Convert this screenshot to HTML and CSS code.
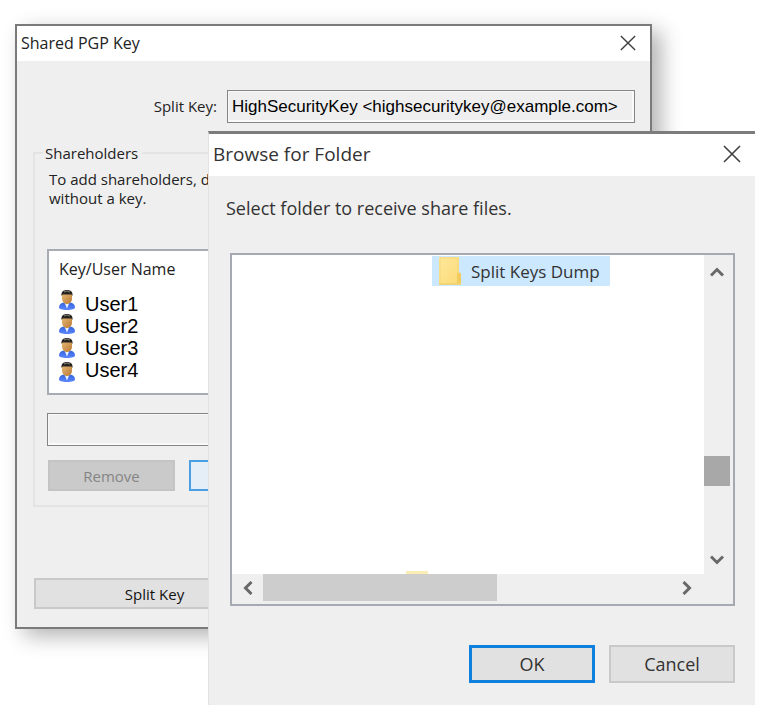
FILE: index.html
```html
<!DOCTYPE html>
<html lang="en">
<head>
<meta charset="utf-8">
<title>Shared PGP Key</title>
<link rel="stylesheet" href="styles.css">
</head>
<body>
<svg class="defs" aria-hidden="true">
  <defs>
    <linearGradient id="skin" x1="0" y1="0" x2="1" y2="1"><stop offset="0" stop-color="#e8b572"/><stop offset="1" stop-color="#b67a35"/></linearGradient>
    <linearGradient id="coat" x1="0" y1="0" x2="0" y2="1"><stop offset="0" stop-color="#3564dc"/><stop offset="1" stop-color="#5b86ff"/></linearGradient>
    <linearGradient id="paper" x1="0" y1="0" x2="1" y2="1"><stop offset="0" stop-color="#ffe89c"/><stop offset="1" stop-color="#fbda75"/></linearGradient>
    <symbol id="person" viewBox="0 0 16 20">
      <path d="M0 17.500C0 14.500 2 13 5 12.500h6c3 .5 5 2 5 5C16 19 13 20 8 20S0 19 0 17.500Z" fill="url(#coat)"/>
      <path d="M5.500 12.500h5L8 18.500Z" fill="#eef4ff"/>
      <path d="M3 4h10v4.500c0 3-2 5.500-5 5.500S3 11.500 3 8.500Z" fill="url(#skin)"/>
      <path d="M2.500 6C2 2 4 0 8 0s6 2 5.500 6L12.500 4.500H3.500Z" fill="#25231f"/>
      <path d="M5 2C7 .8 9 .8 11 2" fill="none" stroke="#77736b" stroke-width="1.200"/>
    </symbol>
    <symbol id="cross" viewBox="0 0 18 18"><path d="M1 1l16 16M17 1L1 17" fill="none" stroke="#404040" stroke-width="1.600"/></symbol>
    <symbol id="chevron" viewBox="0 0 14 12"><path d="M1 9.500L7 3.500l6 6" fill="none" stroke="#686868" stroke-width="3"/></symbol>
  </defs>
</svg>

<main class="desktop">
  <section class="window key-window" aria-labelledby="key-title">
    <header class="titlebar">
      <h1 id="key-title" class="title">Shared PGP Key</h1>
      <button class="close" type="button" aria-label="Close"><svg><use href="#cross"/></svg></button>
    </header>
    <form class="key-body">
      <div class="key-row">
        <label for="split-key">Split Key:</label>
        <input id="split-key" class="field key-field" type="text" readonly value="HighSecurityKey &lt;highsecuritykey@example.com&gt;">
      </div>
      <fieldset class="holders">
        <legend>Shareholders</legend>
        <p class="hint">To add shareholders, d<br>without a key.</p>
        <div class="list">
          <h2 class="list-head">Key/User Name</h2>
          <div class="list-body">
            <div class="icons" aria-hidden="true">
              <svg><use href="#person"/></svg>
              <svg><use href="#person"/></svg>
              <svg><use href="#person"/></svg>
              <svg><use href="#person"/></svg>
            </div>
            <ul class="names">
              <li>User1</li>
              <li>User2</li>
              <li>User3</li>
              <li>User4</li>
            </ul>
          </div>
        </div>
        <input class="field user-field" type="text" readonly aria-label="User">
        <div class="holder-actions">
          <button class="button remove" type="button" disabled>Remove</button>
          <button class="button add" type="button" aria-label="Add"></button>
        </div>
      </fieldset>
      <div class="key-actions">
        <button class="button split" type="button">Split Key</button>
      </div>
    </form>
  </section>

  <section class="window folder-window" role="dialog" aria-labelledby="folder-title">
    <header class="titlebar">
      <h1 id="folder-title" class="title">Browse for Folder</h1>
      <button class="close" type="button" aria-label="Close"><svg><use href="#cross"/></svg></button>
    </header>
    <div class="folder-body">
      <p class="prompt">Select folder to receive share files.</p>
      <div class="browser">
        <ul class="tree">
          <li class="node">
            <svg class="folder" viewBox="0 0 22 28" aria-hidden="true">
              <path d="M0 0h20v16l2 1v11H0Z" fill="url(#paper)"/>
              <path d="M1 27V1h18v15" fill="none" stroke="#f3d77c"/>
              <path d="M18 28V17l2-2 2 2v11Z" fill="#f1cb5e"/>
              <path d="M0 27h22" stroke="#f1d477" stroke-width="2"/>
            </svg>
            <span>Split Keys Dump</span>
          </li>
          <li class="next-folder" aria-hidden="true"></li>
        </ul>
        <div class="vbar">
          <button class="arrow up" type="button" aria-label="Scroll up"><svg><use href="#chevron"/></svg></button>
          <span class="v-before"></span>
          <span class="v-thumb"></span>
          <span class="v-after"></span>
          <button class="arrow down" type="button" aria-label="Scroll down"><svg><use href="#chevron"/></svg></button>
        </div>
        <div class="hbar">
          <button class="arrow left" type="button" aria-label="Scroll left"><svg><use href="#chevron"/></svg></button>
          <span class="h-thumb"></span>
          <span class="h-after"></span>
          <button class="arrow right" type="button" aria-label="Scroll right"><svg><use href="#chevron"/></svg></button>
        </div>
      </div>
      <div class="folder-actions">
        <button class="button ok" type="button">OK</button>
        <button class="button cancel" type="button">Cancel</button>
      </div>
    </div>
  </section>
</main>
</body>
</html>
```
FILE: styles.css
```css
* { box-sizing: border-box; }

body {
  margin: 0;
  background: #fff;
  color: #222;
  font-family: "Open Sans", "Noto Sans", sans-serif;
}

h1, h2, p, ul { margin: 0; padding: 0; font-weight: 400; list-style: none; }
button { margin: 0; padding: 0; font: inherit; color: inherit; }
.defs { position: absolute; width: 0; height: 0; }

.desktop { position: relative; min-height: 720px; overflow: hidden; }
.window { position: absolute; background: #efefef; }

.titlebar {
  display: flex;
  align-items: center;
  justify-content: space-between;
  background: #fff;
}
.close { display: flex; border: 0; background: none; }
.close svg { width: 100%; height: 100%; }

.button { border: 2px solid #c9c9c9; background: #e1e1e1; }

/* Shared key window */
.key-window {
  top: 24px;
  left: 15px;
  right: 127px;
  border: 2px solid #7a7a7a;
  box-shadow: 9px 7px 20px rgba(0, 0, 0, 0.3);
  font-size: 15px;
}
.key-window .titlebar { height: 35px; padding: 0 14px 2px 4px; }
.key-window .title { font-size: 16px; line-height: 20px; }
.key-window .close { width: 16px; height: 16px; }

.key-body { padding: 29px 15px 18px 16px; }
.key-row { display: flex; align-items: center; justify-content: flex-end; gap: 10px; }
.key-row label { padding-bottom: 2px; }

.field {
  height: 33px;
  border: 1px solid #858585;
  background: #efefef;
  box-shadow: inset 1px 1px #f8f8f8, inset -2px -2px #fafafa;
  color: #000;
  font-family: "Liberation Sans", Arial, sans-serif;
  font-size: 17px;
}
.key-field { width: 408px; padding: 0 4px; }

.holders {
  margin: 20px 0 0;
  padding: 0 12px 14px;
  border: 2px solid #e4e4e4;
}
.holders legend { margin-left: -4px; padding: 0 4px 0 2px; line-height: 20px; }
.hint { padding: 7px 0 0 2px; line-height: 19px; }

.list {
  margin-top: 41px;
  height: 146px;
  padding: 7px 10px;
  border: 2px solid #a7abb3;
  background: #fff;
}
.list-head { font-size: 16px; line-height: 22px; }
.list-body { display: flex; gap: 10px; padding-top: 10px; }
.icons { display: grid; grid-auto-rows: 20px; gap: 4px; }
.icons svg { width: 16px; height: 20px; }
.names {
  padding-top: 3px;
  color: #000;
  font-family: "Liberation Sans", Arial, sans-serif;
  font-size: 20px;
  line-height: 22px;
}
.user-field { display: block; width: 100%; margin-top: 18px; }
.holder-actions { display: grid; grid-template-columns: 127px 1fr; gap: 14px; margin-top: 14px; padding-left: 1px; }
.holder-actions .button { height: 31px; }
.remove { border-color: #c4c4c4; background: #cacaca; color: #858585; }
.add { border-color: #4a9fe2; background: #e5edf6; }

.key-actions { display: flex; margin-top: 71px; padding-left: 1px; }
.split { width: 241px; height: 31px; color: #111; }

/* Folder browser window */
.folder-window {
  top: 131px;
  left: 208px;
  right: 24px;
  border-top: 3px solid #7c7c7c;
  border-left: 1px solid #e2e2e2;
  color: #333;
  font-size: 18px;
}
.folder-window .titlebar { height: 42px; padding: 0 14px 2px 4px; }
.folder-window .title { font-size: 19px; line-height: 24px; }
.folder-window .close { width: 18px; height: 18px; }

.folder-body { padding: 20px 20px 22px 21px; }
.prompt { padding: 0 0 33px; margin-left: -4px; line-height: 24px; }

.browser {
  display: grid;
  grid-template: 319px 30px / 1fr 29px;
  border: 2px solid #a5aab2;
  background: #efefef;
}
.tree {
  display: flex;
  flex-direction: column;
  justify-content: space-between;
  align-items: flex-start;
  padding-top: 1px;
  background: #fff;
}
.node {
  display: flex;
  align-items: center;
  gap: 10px;
  height: 30px;
  margin-left: 200px;
  padding: 0 10px 0 7px;
  background: #cce8ff;
  font-size: 17px;
}
.folder { width: 22px; height: 28px; }
.next-folder { width: 22px; height: 3px; margin-left: 174px; background: #fbeeb5; }

.arrow { display: flex; align-items: center; justify-content: center; border: 0; background: none; }
.arrow svg { width: 14px; height: 12px; }
.down svg { transform: rotate(180deg); }
.left svg { transform: rotate(-90deg); }
.right svg { transform: rotate(90deg); }

.vbar { display: flex; flex-direction: column; padding-right: 3px; }
.up { height: 34px; }
.down { height: 28px; }
.v-before { flex: 167; }
.v-thumb { height: 30px; background: #a8a8a8; }
.v-after { flex: 60; }

.hbar { display: flex; padding-bottom: 3px; }
.left { width: 31px; }
.right { width: 34px; }
.h-thumb { width: 234px; background: #cdcdcd; }
.h-after { flex: 1; }

.folder-actions { display: flex; justify-content: flex-end; gap: 14px; margin-top: 39px; }
.folder-actions .button { width: 126px; height: 38px; }
.ok { border: 3px solid #0f80dc; }
```
